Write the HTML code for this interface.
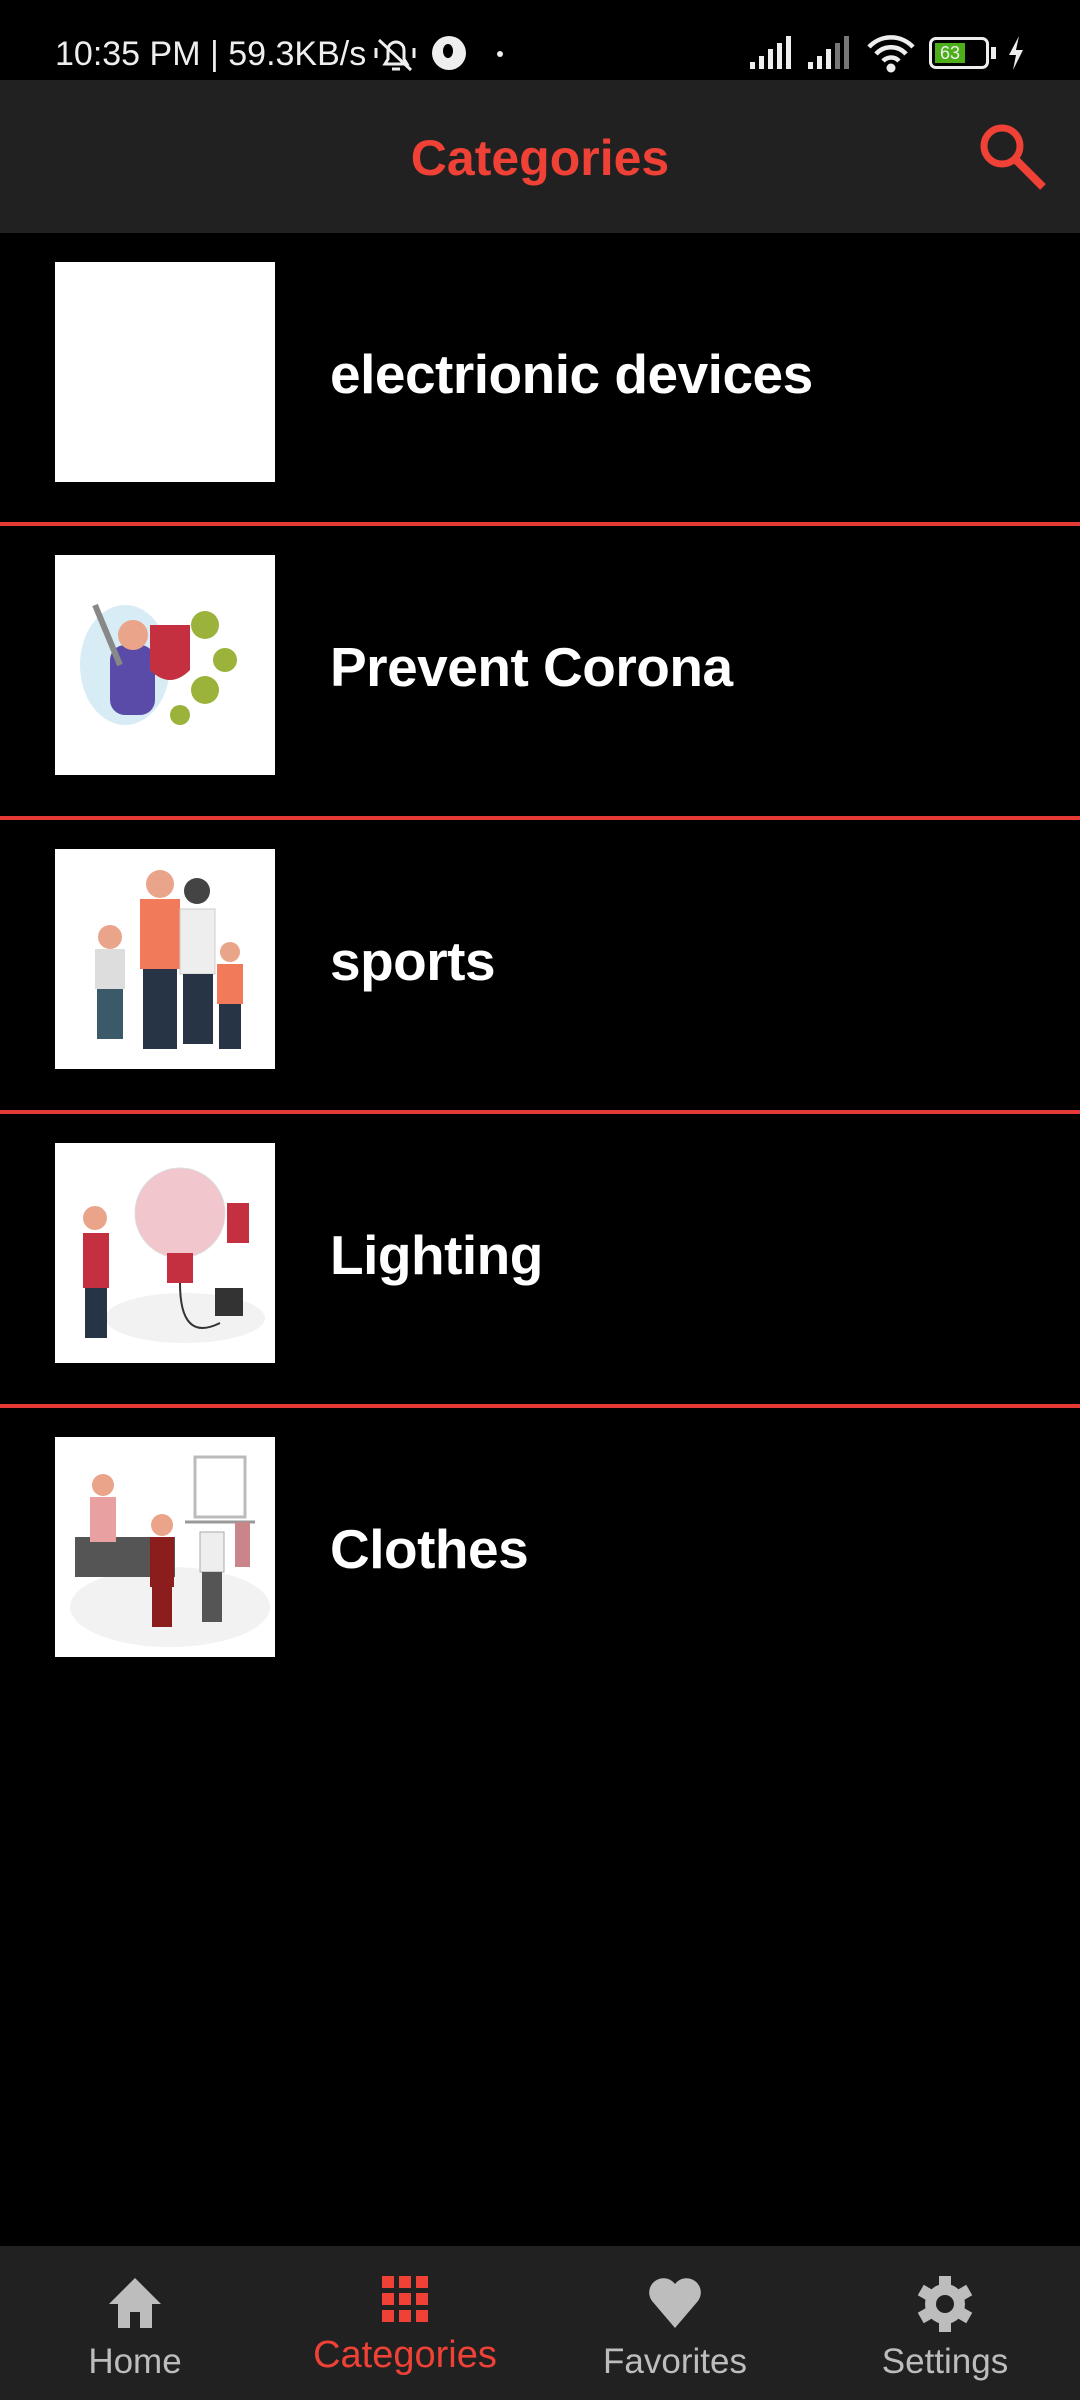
<!DOCTYPE html>
<html><head><meta charset="utf-8"><style>
*{margin:0;padding:0;box-sizing:border-box}
body{width:1080px;height:2400px;background:#000;font-family:"Liberation Sans",sans-serif;position:relative;overflow:hidden;color:#fff}
.sb{position:absolute;top:0;left:0;width:1080px;height:80px;background:#000;font-size:34px;color:#eee}
.ab{position:absolute;top:80px;left:0;width:1080px;height:153px;background:#212121}
.title{position:absolute;left:0;width:1080px;top:129px;text-align:center;color:#ef4136;font-weight:bold;font-size:50px}
.row{position:absolute;left:0;width:1080px;height:294px}
.img{position:absolute;left:55px;top:29px;width:220px;height:220px;background:#fff;overflow:hidden}
.lbl{position:absolute;left:330px;top:109px;font-size:55px;font-weight:bold;letter-spacing:-0.5px}
.div{position:absolute;left:0;width:1080px;height:4px;background:#e53935}
.nav{position:absolute;top:2246px;left:0;width:1080px;height:154px;background:#212121}
.it{position:absolute;top:0;width:270px;text-align:center;color:#bdbdbd;font-size:35px}
.it svg{position:absolute;top:30px;left:50%;transform:translateX(-50%)}
.it span{position:absolute;top:96px;left:0;width:270px;text-align:center}
</style></head><body>
<div class="sb">
<span style="position:absolute;left:55px;top:35px">10:35 PM | 59.3KB/s</span>
<svg style="position:absolute;left:373px;top:34px" width="44" height="40"><path d="M12 30h22l-3-5V16a8 8 0 0 0-16 0v9z M19 35h8 M6 6l32 30 M3 14v10 M41 14v10" stroke="#eee" stroke-width="3" fill="none"/></svg>
<div style="position:absolute;left:432px;top:36px;width:34px;height:34px;border-radius:50%;background:#eee"></div>
<div style="position:absolute;left:443px;top:44px;width:10px;height:14px;border-radius:50%;background:#000"></div>
<div style="position:absolute;left:497px;top:51px;width:6px;height:6px;border-radius:50%;background:#eee"></div>
<svg style="position:absolute;left:750px;top:36px" width="46" height="34"><g fill="#eee"><rect x="0" y="26" width="5" height="7"/><rect x="9" y="20" width="5" height="13"/><rect x="18" y="13" width="5" height="20"/><rect x="27" y="7" width="5" height="26"/><rect x="36" y="0" width="5" height="33"/></g></svg>
<svg style="position:absolute;left:808px;top:36px" width="46" height="34"><g fill="#eee"><rect x="0" y="26" width="5" height="7"/><rect x="9" y="20" width="5" height="13"/><rect x="18" y="13" width="5" height="20"/></g><g fill="#777"><rect x="27" y="7" width="5" height="26"/><rect x="36" y="0" width="5" height="33"/></g></svg>
<svg style="position:absolute;left:866px;top:34px" width="50" height="40"><path d="M3 13a30 30 0 0 1 44 0M10 20a20 20 0 0 1 30 0M17 27a11 11 0 0 1 16 0" stroke="#eee" stroke-width="4.5" fill="none"/><circle cx="25" cy="34" r="4.5" fill="#eee"/></svg>
<div style="position:absolute;left:929px;top:37px;width:60px;height:32px;border:3px solid #eee;border-radius:7px;padding:3px"><div style="width:30px;height:20px;background:#4caf1a;font-size:18px;color:#eee;text-align:center;line-height:20px">63</div></div>
<div style="position:absolute;left:991px;top:47px;width:5px;height:12px;background:#eee"></div>
<svg style="position:absolute;left:1007px;top:36px" width="18" height="34"><path d="M12 0L2 19h7l-3 15 10-20h-7z" fill="#eee"/></svg>
</div>
<div class="ab"></div>
<div class="title">Categories</div>
<svg style="position:absolute;left:978px;top:122px" width="72" height="70"><circle cx="24" cy="24" r="18" stroke="#ef4136" stroke-width="7" fill="none"/><path d="M37 37l28 28" stroke="#ef4136" stroke-width="8"/></svg>

<div class="row" style="top:233px"><div class="img"></div><div class="lbl">electrionic devices</div></div>
<div class="div" style="top:522px"></div>
<div class="row" style="top:526px"><div class="img">
<svg width="220" height="220"><ellipse cx="70" cy="110" rx="45" ry="60" fill="#d8ecf5"/><rect x="55" y="90" width="45" height="70" rx="15" fill="#5b4ba8"/><circle cx="78" cy="80" r="15" fill="#e9a48a"/><path d="M95 70h40v45q-20 20-40 0z" fill="#c4303f"/><g fill="#9bb33a"><circle cx="150" cy="70" r="14"/><circle cx="170" cy="105" r="12"/><circle cx="150" cy="135" r="14"/><circle cx="125" cy="160" r="10"/></g><path d="M40 50l25 60" stroke="#888" stroke-width="6"/></svg>
</div><div class="lbl">Prevent Corona</div></div>
<div class="div" style="top:816px"></div>
<div class="row" style="top:820px"><div class="img">
<svg width="220" height="220"><rect x="85" y="50" width="40" height="70" fill="#f07a5a"/><circle cx="105" cy="35" r="14" fill="#e9a48a"/><rect x="88" y="120" width="34" height="80" fill="#263445"/><rect x="125" y="60" width="35" height="65" fill="#eee" stroke="#ccc"/><rect x="128" y="125" width="30" height="70" fill="#263445"/><circle cx="142" cy="42" r="13" fill="#444"/><rect x="40" y="100" width="30" height="40" fill="#ddd"/><rect x="42" y="140" width="26" height="50" fill="#3a5a6a"/><circle cx="55" cy="88" r="12" fill="#e9a48a"/><rect x="162" y="115" width="26" height="40" fill="#f07a5a"/><rect x="164" y="155" width="22" height="45" fill="#263445"/><circle cx="175" cy="103" r="10" fill="#e9a48a"/></svg>
</div><div class="lbl">sports</div></div>
<div class="div" style="top:1110px"></div>
<div class="row" style="top:1114px"><div class="img">
<svg width="220" height="220"><ellipse cx="130" cy="175" rx="80" ry="25" fill="#f2f2f2"/><circle cx="125" cy="70" r="45" fill="#f1c6cc" stroke="#ddd"/><rect x="112" y="110" width="26" height="30" fill="#c4303f"/><path d="M125 140q0 60 40 40" stroke="#333" stroke-width="2" fill="none"/><rect x="172" y="60" width="22" height="40" fill="#c4303f"/><rect x="160" y="145" width="28" height="28" fill="#333"/><rect x="28" y="90" width="26" height="55" fill="#c4303f"/><circle cx="40" cy="75" r="12" fill="#e9a48a"/><rect x="30" y="145" width="22" height="50" fill="#263445"/></svg>
</div><div class="lbl">Lighting</div></div>
<div class="div" style="top:1404px"></div>
<div class="row" style="top:1408px"><div class="img">
<svg width="220" height="220"><ellipse cx="115" cy="170" rx="100" ry="40" fill="#f2f2f2"/><rect x="20" y="100" width="100" height="40" fill="#555"/><rect x="140" y="20" width="50" height="60" fill="none" stroke="#bbb" stroke-width="3"/><rect x="35" y="60" width="26" height="45" fill="#e9a0a0"/><circle cx="48" cy="48" r="11" fill="#e9a48a"/><rect x="95" y="100" width="24" height="50" fill="#8b1d1d"/><rect x="97" y="150" width="20" height="40" fill="#8b1d1d"/><circle cx="107" cy="88" r="11" fill="#e9a48a"/><rect x="145" y="95" width="24" height="40" fill="#eee" stroke="#aaa"/><rect x="147" y="135" width="20" height="50" fill="#555"/><path d="M130 85h70" stroke="#999" stroke-width="3"/><rect x="180" y="85" width="15" height="45" fill="#c9858a"/></svg>
</div><div class="lbl">Clothes</div></div>

<div class="nav">
<div class="it" style="left:0"><svg width="60" height="52" viewBox="0 0 60 52"><path d="M30 2L4 28h9v24h12V36h10v16h12V28h9z" fill="#bdbdbd"/></svg><span>Home</span></div>
<div class="it" style="left:270px;color:#ef4136"><svg width="46" height="46" viewBox="0 0 46 46" fill="#ef4136"><rect x="0" y="0" width="12" height="12"/><rect x="17" y="0" width="12" height="12"/><rect x="34" y="0" width="12" height="12"/><rect x="0" y="17" width="12" height="12"/><rect x="17" y="17" width="12" height="12"/><rect x="34" y="17" width="12" height="12"/><rect x="0" y="34" width="12" height="12"/><rect x="17" y="34" width="12" height="12"/><rect x="34" y="34" width="12" height="12"/></svg><span style="top:88px;font-size:38px">Categories</span></div>
<div class="it" style="left:540px"><svg width="56" height="52" viewBox="0 0 56 52"><path d="M28 52L5 25A13 13 0 0 1 28 8a13 13 0 0 1 23 17z" fill="#bdbdbd"/></svg><span>Favorites</span></div>
<div class="it" style="left:810px"><svg width="56" height="56" viewBox="-28 -28 56 56"><g fill="#bdbdbd"><circle r="20"/><rect x="-6" y="-28" width="12" height="56"/><rect x="-6" y="-28" width="12" height="56" transform="rotate(60)"/><rect x="-6" y="-28" width="12" height="56" transform="rotate(120)"/></g><circle r="9" fill="#212121"/></svg><span>Settings</span></div>
</div>
</body></html>
